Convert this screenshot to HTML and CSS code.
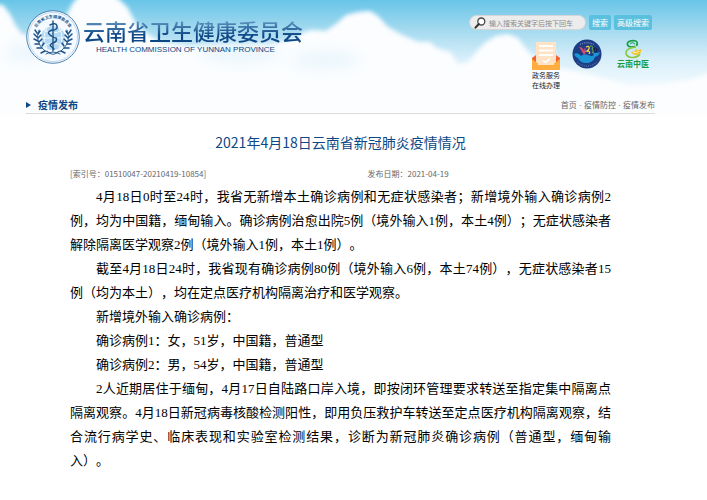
FILE: index.html
```
<!DOCTYPE html>
<html lang="zh-CN">
<head>
    <meta charset="UTF-8">
    <meta name="viewport" content="width=device-width, initial-scale=1.0">
    <title>2021年4月18日云南省新冠肺炎疫情情况</title>
    <link rel="stylesheet" href="styles.css">
</head>
<body>

    <!-- 天空背景 -->
    <svg class="sky" viewBox="0 0 707 115" preserveAspectRatio="none" aria-hidden="true">
        <defs>
            <linearGradient id="sky-fill" x1="0" y1="0" x2="0" y2="1">
                <stop offset="0" stop-color="#68c5e8"/>
                <stop offset=".25" stop-color="#a2d9ef"/>
                <stop offset=".5" stop-color="#d6eef9"/>
                <stop offset=".8" stop-color="#f7fcff"/>
                <stop offset="1" stop-color="#ffffff"/>
            </linearGradient>
            <filter id="soft" x="-5%" y="-20%" width="110%" height="140%"><feGaussianBlur stdDeviation="2"/></filter>
            <filter id="haze" x="-20%" y="-50%" width="140%" height="200%"><feGaussianBlur stdDeviation="7"/></filter>
        </defs>
        <rect width="707" height="115" fill="url(#sky-fill)"/>
        <g filter="url(#soft)">
            <path fill="#fbfdff" d="M-10 4L3 5 10 14 16 26 22 34 40 38 58 30 66 16 72 4 80-6 112-6 120 0 128 8 134 20 142 30 160 42 190 46 230 44 270 44 296 38 304 32 312 30 326 31 336 24 346 15 358 12 370 11 378 16 388 27 402 35 418 42 430 42 436 48 450 52 458 64 468 62 478 50 486 42 496 36 508 34 518 38 530 54 548 66 590 74 630 86 664 84 690 80 717 70 717 130-10 130Z"/>
        </g>
        <g filter="url(#haze)" fill="#d9eef9" opacity=".5">
            <ellipse cx="26" cy="52" rx="20" ry="8"/>
            <ellipse cx="240" cy="52" rx="40" ry="10"/>
            <ellipse cx="325" cy="60" rx="34" ry="8"/>
        </g>
    </svg>

    <div class="container">
        <header class="header">
            <div class="brand">
                <svg class="emblem" viewBox="0 0 54 54" aria-hidden="true">
                    <defs><path id="ring" d="M8 27A19 19 0 0 1 46 27"/></defs>
                    <circle cx="27" cy="27" r="26.300" fill="#f4faff" stroke="#3f78ab" stroke-width=".9"/>
                    <circle cx="27" cy="27" r="24.600" fill="none" stroke="#8db4d5" stroke-width=".5"/>
                    <circle cx="27" cy="28" r="12" fill="#b4daf3"/>
                    <path d="M15 28H39M27 16V40M18 20Q27 26 36 20M18 36Q27 30 36 36M21 18Q15 28 21 38M33 18Q39 28 33 38" fill="none" stroke="#fff" stroke-width=".8"/>
                    <text class="emblem-text"><textPath href="#ring" startOffset="50%">云南省卫生健康委员会</textPath></text>
                    <g fill="none" stroke="#1d5388" stroke-linecap="round">
                        <path d="M13 20Q8 32 19 41L24 43M41 20Q46 32 35 41L30 43" stroke-width=".9"/>
                        <path d="M11 23L9 20M11 27L8 24M12 31L8 29M13 34L9 34M16 38L11 38M19 41L15 43M12 24L14 21M12 28L15 25M13 32L16 29M16 36L18 33M43 23L45 20M43 27L46 24M42 31L46 29M41 34L45 34M38 38L43 38M35 41L39 43M42 24L40 21M42 28L39 25M41 32L38 29M38 36L36 33" stroke-width="1.500"/>
                        <path d="M20 44Q27 40 34 44M21 41Q27 48 33 41" stroke-width=".9"/>
                        <path d="M27 11V41" stroke-width="1.400"/>
                        <path d="M24 15Q30 12 31 16T26 20Q20 22 24 25T30 28Q32 31 27 33T26 37L28 39" stroke-width="1.500"/>
                    </g>
                </svg>
                <div class="brand-name">
                    <h1>云南省卫生健康委员会</h1>
                    <p>HEALTH COMMISSION OF YUNNAN PROVINCE</p>
                </div>
            </div>

            <div class="tools">
                <form class="search">
                    <label class="search-box">
                        <svg class="search-icon" viewBox="0 0 12 12" aria-hidden="true">
                            <circle cx="7.300" cy="4.500" r="3.500" fill="#fff" stroke="#444" stroke-width="1.300"/>
                            <path d="M4.800 7L1.500 10.700" stroke="#333" stroke-width="2" stroke-linecap="round"/>
                        </svg>
                        <input type="text" aria-label="搜索" placeholder="输入搜索关键字后按下回车">
                    </label>
                    <button type="button">搜索</button>
                    <button type="button">高级搜索</button>
                </form>
                <nav class="links">
                    <a class="service" href="#">
                        <svg viewBox="0 0 28 28" aria-hidden="true">
                            <path d="M0 16L4 13H24L28 16V27H0Z" fill="#f4602f"/>
                            <path d="M4 0H24V26H4Z" fill="#ffe3c4"/>
                            <path d="M7 4H21M7 8.500H21M7 13H21" stroke="#fff" stroke-width="1.800"/>
                            <path d="M0 17L8 23H20L28 17V28H0Z" fill="#ffad40"/>
                            <path d="M6 15H22V23H6Z" fill="#ffe3c4"/>
                            <path d="M11 18L13.500 20.500 18 16.500" fill="none" stroke="#fff" stroke-width="1.400"/>
                        </svg>
                        <span>政务服务<br>在线办理</span>
                    </a>
                    <a class="round" href="#" aria-label="12320">
                        <svg viewBox="0 0 30 30" aria-hidden="true">
                            <circle cx="15" cy="15" r="14.500" fill="#1d3d84"/>
                            <path d="M8 5.500Q15 2 22 5.500" fill="none" stroke="#a9bbdc" stroke-dasharray="1 1.200"/>
                            <path d="M5 23Q15 31 25 23" fill="none" stroke="#8397c7" stroke-width=".7" stroke-dasharray="1 1"/>
                            <path d="M2 15Q6 13 9 17Q12 14 16 16Q20 18 22 16L20 13Q24 15 28 13Q27 17 23 18Q21 24 14 24Q8 24 6 19Q3 18 2 15Z" fill="#1c95d7"/>
                            <path d="M7 8Q11 8 12 12L13 8Q15 13 12 16Q10 12 7 8Z" fill="#d84b78"/>
                            <path d="M14 8Q18 6 17 10L15 12Q19 12 17 15" fill="none" stroke="#f5d448" stroke-width="1.300"/>
                            <path d="M18 7Q22 7 20 10Q23 12 20 14" fill="none" stroke="#76b843" stroke-width="1"/>
                            <ellipse cx="23.500" cy="11" rx="1.500" ry="2" fill="none" stroke="#101c46"/>
                        </svg>
                    </a>
                    <a class="tcm" href="#">
                        <svg viewBox="0 0 20 20" aria-hidden="true">
                            <path d="M13.500 7Q16 1.500 10 1.500Q3.500 2 4.500 6Q6 9 12 7.500" fill="none" stroke="#159b45" stroke-width="1.700"/>
                            <path d="M7 4.500Q10 2.500 12 5" fill="none" stroke="#159b45" stroke-width="1"/>
                            <path d="M13 8Q3 9 3 13.500Q3 18.500 10 18.500Q15 18 17 15" fill="none" stroke="#8cc63d" stroke-width="1.700"/>
                            <path d="M8 13Q12 13 13 10Q15 12 18 10Q19 15 14 16Q10 16.500 8 13Z" fill="#f4c52a"/>
                            <path d="M10 13.500Q14 14 16 12" fill="none" stroke="#fff" stroke-width=".8"/>
                        </svg>
                        <span>云南中医</span>
                    </a>
                </nav>
            </div>
        </header>

        <div class="section-bar">
            <h2>疫情发布</h2>
            <nav class="crumbs">
                <a href="#">首页</a> · <a href="#">疫情防控</a> · <a href="#">疫情发布</a>
            </nav>
        </div>

        <article class="article">
            <h3>2021年4月18日云南省新冠肺炎疫情情况</h3>
            <div class="meta">
                <span>[索引号：01510047-20210419-10854]</span>
                <span>发布日期：2021-04-19</span>
            </div>
            <p>4月18日0时至24时，我省无新增本土确诊病例和无症状感染者；新增境外输入确诊病例2例，均为中国籍，缅甸输入。确诊病例治愈出院5例（境外输入1例，本土4例）；无症状感染者解除隔离医学观察2例（境外输入1例，本土1例）。</p>
            <p>截至4月18日24时，我省现有确诊病例80例（境外输入6例，本土74例），无症状感染者15例（均为本土），均在定点医疗机构隔离治疗和医学观察。</p>
            <p>新增境外输入确诊病例：</p>
            <p>确诊病例1：女，51岁，中国籍，普通型</p>
            <p>确诊病例2：男，54岁，中国籍，普通型</p>
            <p>2人近期居住于缅甸，4月17日自陆路口岸入境，即按闭环管理要求转送至指定集中隔离点隔离观察。4月18日新冠病毒核酸检测阳性，即用负压救护车转送至定点医疗机构隔离观察，结合流行病学史、临床表现和实验室检测结果，诊断为新冠肺炎确诊病例（普通型，缅甸输入）。</p>
        </article>
    </div>

</body>
</html>
```
FILE: styles.css
```
* {
    box-sizing: border-box;
}
body {
    margin: 0;
    position: relative;
    background-color: #fff;
    font-family: "Noto Sans CJK SC", sans-serif;
    font-size: 8px;
    color: #666;
}
h1, h2, h3, p {
    margin: 0;
}
a {
    color: inherit;
    text-decoration: none;
}
svg {
    display: block;
}
.sky {
    position: absolute;
    top: 0;
    left: 0;
    width: 100%;
    height: 115px;
    z-index: -1;
}
.container {
    max-width: 940px;
    margin: auto;
    padding: 0 52px 0 26px;
}

/* 页头 */
.header {
    display: flex;
    justify-content: space-between;
    height: 96px;
    padding-top: 10px;
}
.brand {
    display: flex;
    align-items: flex-start;
    gap: 3px;
}
.emblem {
    width: 54px;
    height: 54px;
}
.emblem-text {
    font-size: 4px;
    font-weight: bold;
    fill: #1d5388;
    text-anchor: middle;
}
.brand-name {
    padding-top: 6px;
}
.brand-name h1 {
    font-size: 22px;
    line-height: 28px;
    font-weight: 500;
    color: transparent;
    background: linear-gradient(#6599c4 15%, #0d4785 70%);
    background-clip: text;
    -webkit-background-clip: text;
}
.brand-name p {
    padding-left: 13px;
    font-family: "Liberation Sans", Arial, sans-serif;
    font-size: 8px;
    line-height: 12px;
    color: #0d4785;
}
.tools {
    padding: 5px 3px 0 0;
}
.search {
    display: flex;
    gap: 3px;
}
.search-box {
    display: flex;
    align-items: center;
    gap: 3px;
    width: 117px;
    height: 15px;
    padding: 0 4px;
    border: 1px solid #d4d4d4;
    border-radius: 8px;
    background-color: #ececec;
}
.search-icon {
    flex: none;
    width: 12px;
    height: 12px;
}
.search input {
    width: 100%;
    min-width: 0;
    padding: 0;
    border: none;
    outline: none;
    background: none;
    font-family: inherit;
    font-size: 7px;
    color: #555;
}
.search input::placeholder {
    color: #8c8c8c;
}
.search button {
    height: 15px;
    padding: 0 3px;
    border: none;
    border-radius: 2px;
    background-color: #5bc0de;
    font-family: inherit;
    font-size: 8px;
    line-height: 15px;
    color: #fff;
    cursor: pointer;
}
.links {
    display: flex;
    justify-content: flex-end;
    align-items: flex-start;
    margin-top: 9px;
    padding-right: 3px;
}
.service {
    padding-top: 3px;
    font-size: 7px;
    line-height: 10px;
    color: #222;
    text-align: center;
}
.service svg {
    width: 28px;
    height: 28px;
}
.round {
    margin: 0 15px 0 12px;
}
.round svg {
    width: 30px;
    height: 30px;
}
.tcm {
    font-size: 8px;
    line-height: 9px;
    font-weight: bold;
    color: #159b45;
}
.tcm svg {
    width: 20px;
    height: 20px;
    margin: 0 auto;
}

/* 栏目标题 */
.section-bar {
    display: flex;
    justify-content: space-between;
    align-items: center;
    height: 18px;
    border-bottom: 1px solid #dcdcdc;
}
.section-bar h2 {
    display: flex;
    align-items: center;
    gap: 7px;
    font-size: 10px;
    line-height: 16px;
    color: #0d4785;
}
.section-bar h2::before {
    content: "";
    border: 3px solid transparent;
    border-left: 5px solid #0d4785;
    border-right: none;
}
.crumbs {
    font-family: "Liberation Sans", "Noto Sans CJK SC", sans-serif;
}

/* 正文 */
.article {
    padding: 18px 44px 20px;
}
.article h3 {
    font-size: 14px;
    line-height: 20px;
    font-weight: normal;
    color: #0d4785;
    text-align: center;
}
.meta {
    display: grid;
    grid-template-columns: 55% 45%;
    margin-top: 16px;
    line-height: 12px;
}
.article p {
    font-family: "Liberation Serif", "Noto Sans CJK SC", serif;
    font-size: 13px;
    line-height: 24px;
    color: #000;
    text-indent: 2em;
    text-align: justify;
    text-spacing-trim: space-all;
}
.meta + p {
    margin-top: 5px;
}
```
